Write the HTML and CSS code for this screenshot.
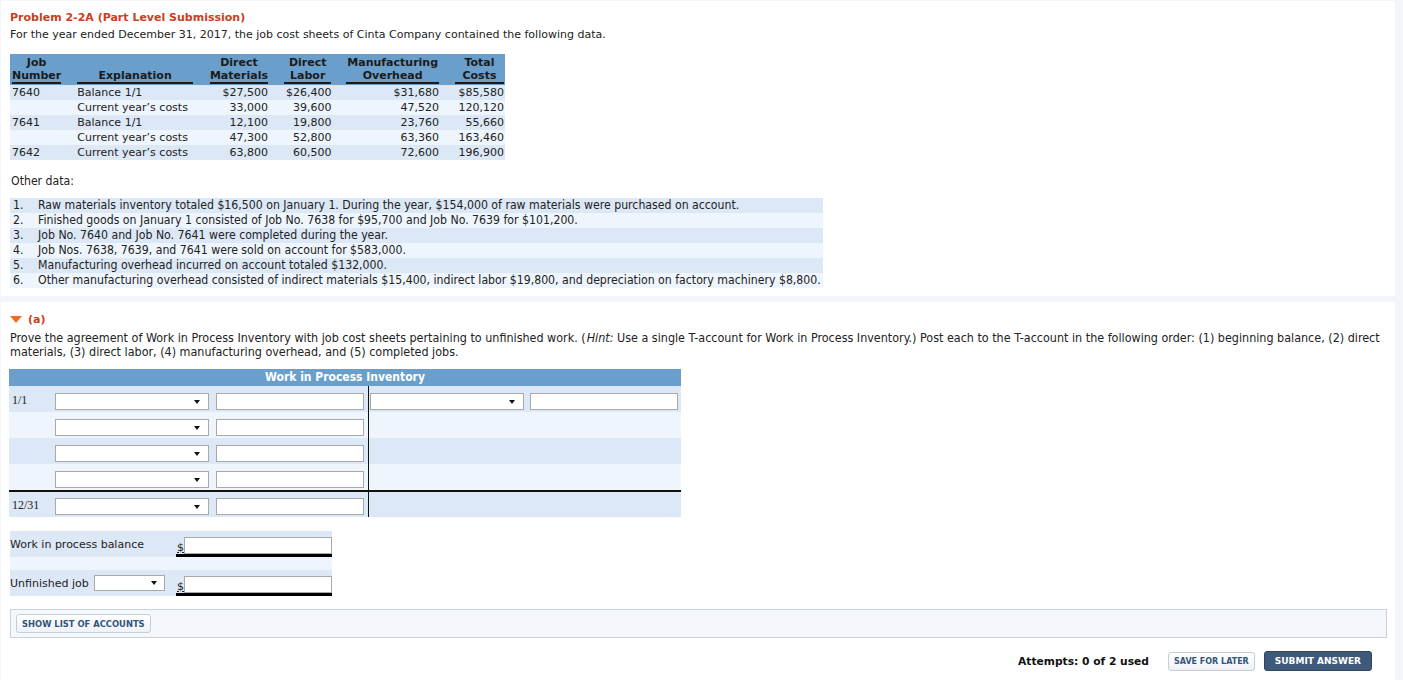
FILE: index.html
```html
<!DOCTYPE html>
<html>
<head lang="en">
    <meta charset="UTF-8">
    <title>Problem 2-2A</title>
    <link rel="stylesheet" href="styles.css">
</head>
<body>

<main>
    <section class="panel intro">
        <h1 class="title">Problem 2-2A (Part Level Submission)</h1>
        <p class="lead">For the year ended December 31, 2017, the job cost sheets of Cinta Company contained the following data.</p>

        <table class="jobs">
            <thead>
            <tr>
                <th class="c1"><div class="u">Job<br>Number</div></th>
                <th class="c2"><div class="u"><br>Explanation</div></th>
                <th class="c3"><div class="u">Direct<br>Materials</div></th>
                <th class="c4"><div class="u">Direct<br>Labor</div></th>
                <th class="c5"><div class="u">Manufacturing<br>Overhead</div></th>
                <th class="c6"><div class="u">Total<br>Costs</div></th>
            </tr>
            </thead>
            <tbody>
            <tr><td class="c1">7640</td><td class="c2">Balance 1/1</td><td class="c3">$27,500</td><td class="c4">$26,400</td><td class="c5">$31,680</td><td class="c6">$85,580</td></tr>
            <tr><td class="c1"></td><td class="c2">Current year’s costs</td><td class="c3">33,000</td><td class="c4">39,600</td><td class="c5">47,520</td><td class="c6">120,120</td></tr>
            <tr><td class="c1">7641</td><td class="c2">Balance 1/1</td><td class="c3">12,100</td><td class="c4">19,800</td><td class="c5">23,760</td><td class="c6">55,660</td></tr>
            <tr><td class="c1"></td><td class="c2">Current year’s costs</td><td class="c3">47,300</td><td class="c4">52,800</td><td class="c5">63,360</td><td class="c6">163,460</td></tr>
            <tr><td class="c1">7642</td><td class="c2">Current year’s costs</td><td class="c3">63,800</td><td class="c4">60,500</td><td class="c5">72,600</td><td class="c6">196,900</td></tr>
            </tbody>
        </table>

        <p class="other-label">Other data:</p>
        <ol class="other">
            <li><span class="n">1.</span>Raw materials inventory totaled $16,500 on January 1. During the year, $154,000 of raw materials were purchased on account.</li>
            <li><span class="n">2.</span>Finished goods on January 1 consisted of Job No. 7638 for $95,700 and Job No. 7639 for $101,200.</li>
            <li><span class="n">3.</span>Job No. 7640 and Job No. 7641 were completed during the year.</li>
            <li><span class="n">4.</span>Job Nos. 7638, 7639, and 7641 were sold on account for $583,000.</li>
            <li><span class="n">5.</span>Manufacturing overhead incurred on account totaled $132,000.</li>
            <li><span class="n">6.</span>Other manufacturing overhead consisted of indirect materials $15,400, indirect labor $19,800, and depreciation on factory machinery $8,800.</li>
        </ol>
    </section>

    <section class="panel part">
        <h2 class="part-head"><span class="tri"></span>(a)</h2>
        <p class="prompt">Prove the agreement of Work in Process Inventory with job cost sheets pertaining to unfinished work. (<span class="hint">Hint:</span> Use a single T-account for Work in Process Inventory.) Post each to the T-account in the following order: (1) beginning balance, (2) direct materials, (3) direct labor, (4) manufacturing overhead, and (5) completed jobs.</p>

        <div class="taccount">
            <div class="t-head">Work in Process Inventory</div>
            <div class="t-row dark">
                <div class="debit">
                    <span class="date">1/1</span>
                    <span class="sel"><select class="pick"><option></option></select></span>
                    <input class="amt" type="text">
                </div>
                <div class="credit">
                    <span class="sel"><select class="pick"><option></option></select></span>
                    <input class="amt" type="text">
                </div>
            </div>
            <div class="t-row light">
                <div class="debit">
                    <span class="date"></span>
                    <span class="sel"><select class="pick"><option></option></select></span>
                    <input class="amt" type="text">
                </div>
                <div class="credit"></div>
            </div>
            <div class="t-row dark">
                <div class="debit">
                    <span class="date"></span>
                    <span class="sel"><select class="pick"><option></option></select></span>
                    <input class="amt" type="text">
                </div>
                <div class="credit"></div>
            </div>
            <div class="t-row light">
                <div class="debit">
                    <span class="date"></span>
                    <span class="sel"><select class="pick"><option></option></select></span>
                    <input class="amt" type="text">
                </div>
                <div class="credit"></div>
            </div>
            <div class="t-row dark total">
                <div class="debit">
                    <span class="date">12/31</span>
                    <span class="sel"><select class="pick"><option></option></select></span>
                    <input class="amt" type="text">
                </div>
                <div class="credit"></div>
            </div>
        </div>

        <div class="balances">
            <div class="bal-row dark">
                <span class="bal-label">Work in process balance</span>
                <span class="money"><span class="cur">$</span><input class="amt" type="text"></span>
            </div>
            <div class="bal-gap"></div>
            <div class="bal-row dark">
                <span class="bal-label">Unfinished job <span class="sel small"><select class="pick"><option></option></select></span></span>
                <span class="money"><span class="cur">$</span><input class="amt" type="text"></span>
            </div>
        </div>

        <div class="accounts-bar">
            <button class="btn">Show List of Accounts</button>
        </div>

        <div class="actions">
            <span class="attempts">Attempts: 0 of 2 used</span>
            <button class="btn save">Save for Later</button>
            <button class="btn primary">Submit Answer</button>
        </div>
    </section>
</main>

</body>
</html>
```

FILE: styles.css
```css
* {
    box-sizing: border-box;
}
body {
    margin: 0;
    background-color: #f2f6fa;
    font-family: "DejaVu Sans", Verdana, sans-serif;
    font-size: 11px;
    color: #222;
}
main {
    padding-top: 1px;
}
.panel {
    width: 1394px;
    margin-left: 1px;
    background-color: #fff;
}
.intro {
    height: 295px;
    padding: 9px 10px 0 9px;
}
.title {
    margin: 0;
    font-size: 11px;
    line-height: 15px;
    color: #c8401c;
}
.lead {
    margin: 2px 0 12px 0;
    line-height: 15px;
}

/* job cost sheet table */
.jobs {
    border-collapse: collapse;
    width: 495px;
}
.jobs th {
    background-color: #6a9fcb;
    color: #1b1b1b;
    font-weight: bold;
    text-align: center;
    padding-top: 2px;
    padding-bottom: 1px;
    vertical-align: bottom;
}
.jobs .u {
    line-height: 13px;
    border-bottom: 2px solid #1b1b1b;
}
.jobs td {
    line-height: 15px;
    padding-top: 0;
    padding-bottom: 0;
    text-align: right;
    white-space: nowrap;
}
.jobs tbody tr:nth-child(odd) td {
    background-color: #dce8f6;
}
.jobs tbody tr:nth-child(even) td {
    background-color: #eef5fd;
}
.jobs .c1 { width: 52px; padding-left: 2px; text-align: left; }
.jobs .c2 { width: 133px; padding-left: 15px; text-align: left; }
.jobs .c3 { width: 72px; padding-left: 16px; }
.jobs .c4 { width: 64px; padding-left: 15px; }
.jobs .c5 { width: 108px; padding-left: 14px; }
.jobs .c6 { width: 66px; padding-left: 15px; }
.jobs th.c1, .jobs th.c2, .jobs th.c3, .jobs th.c4, .jobs th.c5, .jobs th.c6 {
    text-align: center;
}

.other-label {
    margin: 14px 0 9px 1px;
    font-family: "DejaVu Sans Condensed", "Liberation Sans", sans-serif;
    font-size: 12.2px;
    line-height: 15px;
}
.other {
    list-style: none;
    margin: 0;
    padding: 0;
    width: 813px;
    font-family: "DejaVu Sans Condensed", "Liberation Sans", sans-serif;
    font-size: 12.2px;
}
.other li {
    display: flex;
    line-height: 15px;
    background-color: #dce8f6;
}
.other li:nth-child(even) {
    background-color: #eef5fd;
}
.other .n {
    width: 28px;
    padding-left: 3px;
}

/* part (a) */
.part {
    margin-top: 6px;
    height: 378px;
    padding: 10px 9px 0 9px;
}
.part-head {
    margin: 0;
    font-size: 11px;
    line-height: 15px;
    color: #c8401c;
    display: flex;
    align-items: center;
}
.tri {
    width: 0;
    height: 0;
    border-left: 6px solid transparent;
    border-right: 6px solid transparent;
    border-top: 7px solid #f06a24;
    margin-right: 6px;
}
.prompt {
    margin: 4px 0 10px 0;
    font-family: "DejaVu Sans Condensed", "Liberation Sans", sans-serif;
    font-size: 12.45px;
    line-height: 14px;
}
.hint {
    font-style: italic;
    margin-left: 1px;
}

/* T-account */
.taccount {
    width: 672px;
    margin-left: -1px;
}
.t-head {
    height: 17px;
    line-height: 17px;
    text-align: center;
    background-color: #6a9fcb;
    color: #fff;
    font-family: "DejaVu Sans Condensed", "Liberation Sans", sans-serif;
    font-size: 12px;
    font-weight: bold;
}
.t-row {
    display: grid;
    grid-template-columns: 360px 312px;
    height: 26px;
}
.t-row.dark {
    background-color: #dce8f6;
}
.t-row.light {
    background-color: #eef5fd;
}
.t-row.total {
    border-top: 2px solid #111;
    height: 27px;
}
.debit {
    display: flex;
    align-items: flex-start;
    padding-top: 7px;
    border-right: 1px solid #111;
}
.credit {
    display: flex;
    align-items: flex-start;
    padding: 7px 0 0 1px;
}
.total .debit,
.total .credit {
    padding-top: 6px;
}
.date {
    width: 46px;
    padding-left: 3px;
    font-family: "Liberation Serif", serif;
    font-size: 12px;
    line-height: 14px;
}

.sel {
    position: relative;
    display: inline-block;
}
.sel::after {
    content: "";
    position: absolute;
    right: 9px;
    top: 7px;
    border-left: 3px solid transparent;
    border-right: 3px solid transparent;
    border-top: 4px solid #111;
    pointer-events: none;
}
.pick {
    appearance: none;
    -webkit-appearance: none;
    display: block;
    width: 154px;
    height: 17px;
    margin: 0;
    padding: 0;
    background-color: #fff;
    border: 1px solid #a9a9a9;
    border-radius: 0;
}
.sel.small .pick {
    width: 71px;
    height: 16px;
}
.sel.small::after {
    top: 6px;
    right: 8px;
}
.amt {
    width: 148px;
    height: 17px;
    margin: 0 0 0 7px;
    padding: 0;
    border: 1px solid #a9a9a9;
    background-color: #fff;
}
.credit .amt {
    margin-left: 6px;
}

/* balances */
.balances {
    margin-top: 14px;
    width: 322px;
}
.bal-row {
    display: flex;
    height: 26px;
    padding-top: 6px;
    background-color: #dce8f6;
}
.bal-gap {
    height: 13px;
    background-color: #eef5fd;
}
.bal-label {
    width: 166px;
    line-height: 15px;
    padding-bottom: 6px;
    display: flex;
    align-items: center;
    gap: 5px;
}
.money {
    display: flex;
    align-items: flex-end;
    border-bottom: 3px solid #000;
    width: 156px;
    height: 20px;
}
.cur {
    width: 8px;
    padding-left: 1px;
    line-height: 12px;
    text-decoration: underline;
}
.money .amt {
    margin: 0;
}

/* buttons */
.accounts-bar {
    margin-top: 13px;
    width: 1377px;
    height: 29px;
    padding: 4px 0 0 5px;
    background-color: #f4f7fb;
    border: 1px solid #c9d1dc;
}
.btn {
    height: 19px;
    padding: 0 5px;
    font-family: "DejaVu Sans", Verdana, sans-serif;
    font-size: 8.4px;
    font-weight: bold;
    text-transform: uppercase;
    color: #34547a;
    background: linear-gradient(#ffffff, #eef2f7);
    border: 1px solid #c5ccd6;
    border-radius: 3px;
}
.actions {
    display: flex;
    justify-content: flex-end;
    align-items: center;
    width: 1362px;
    margin-top: 13px;
    gap: 9px;
}
.attempts {
    font-size: 10.7px;
    font-weight: bold;
    color: #111;
    margin-right: 10px;
}
.btn.save {
    font-size: 8px;
    padding: 0 5px;
}
.btn.primary {
    height: 20px;
    font-size: 9px;
    color: #fff;
    background: #3e5a78;
    border-color: #2d4560;
    padding: 0 10px;
}
```
